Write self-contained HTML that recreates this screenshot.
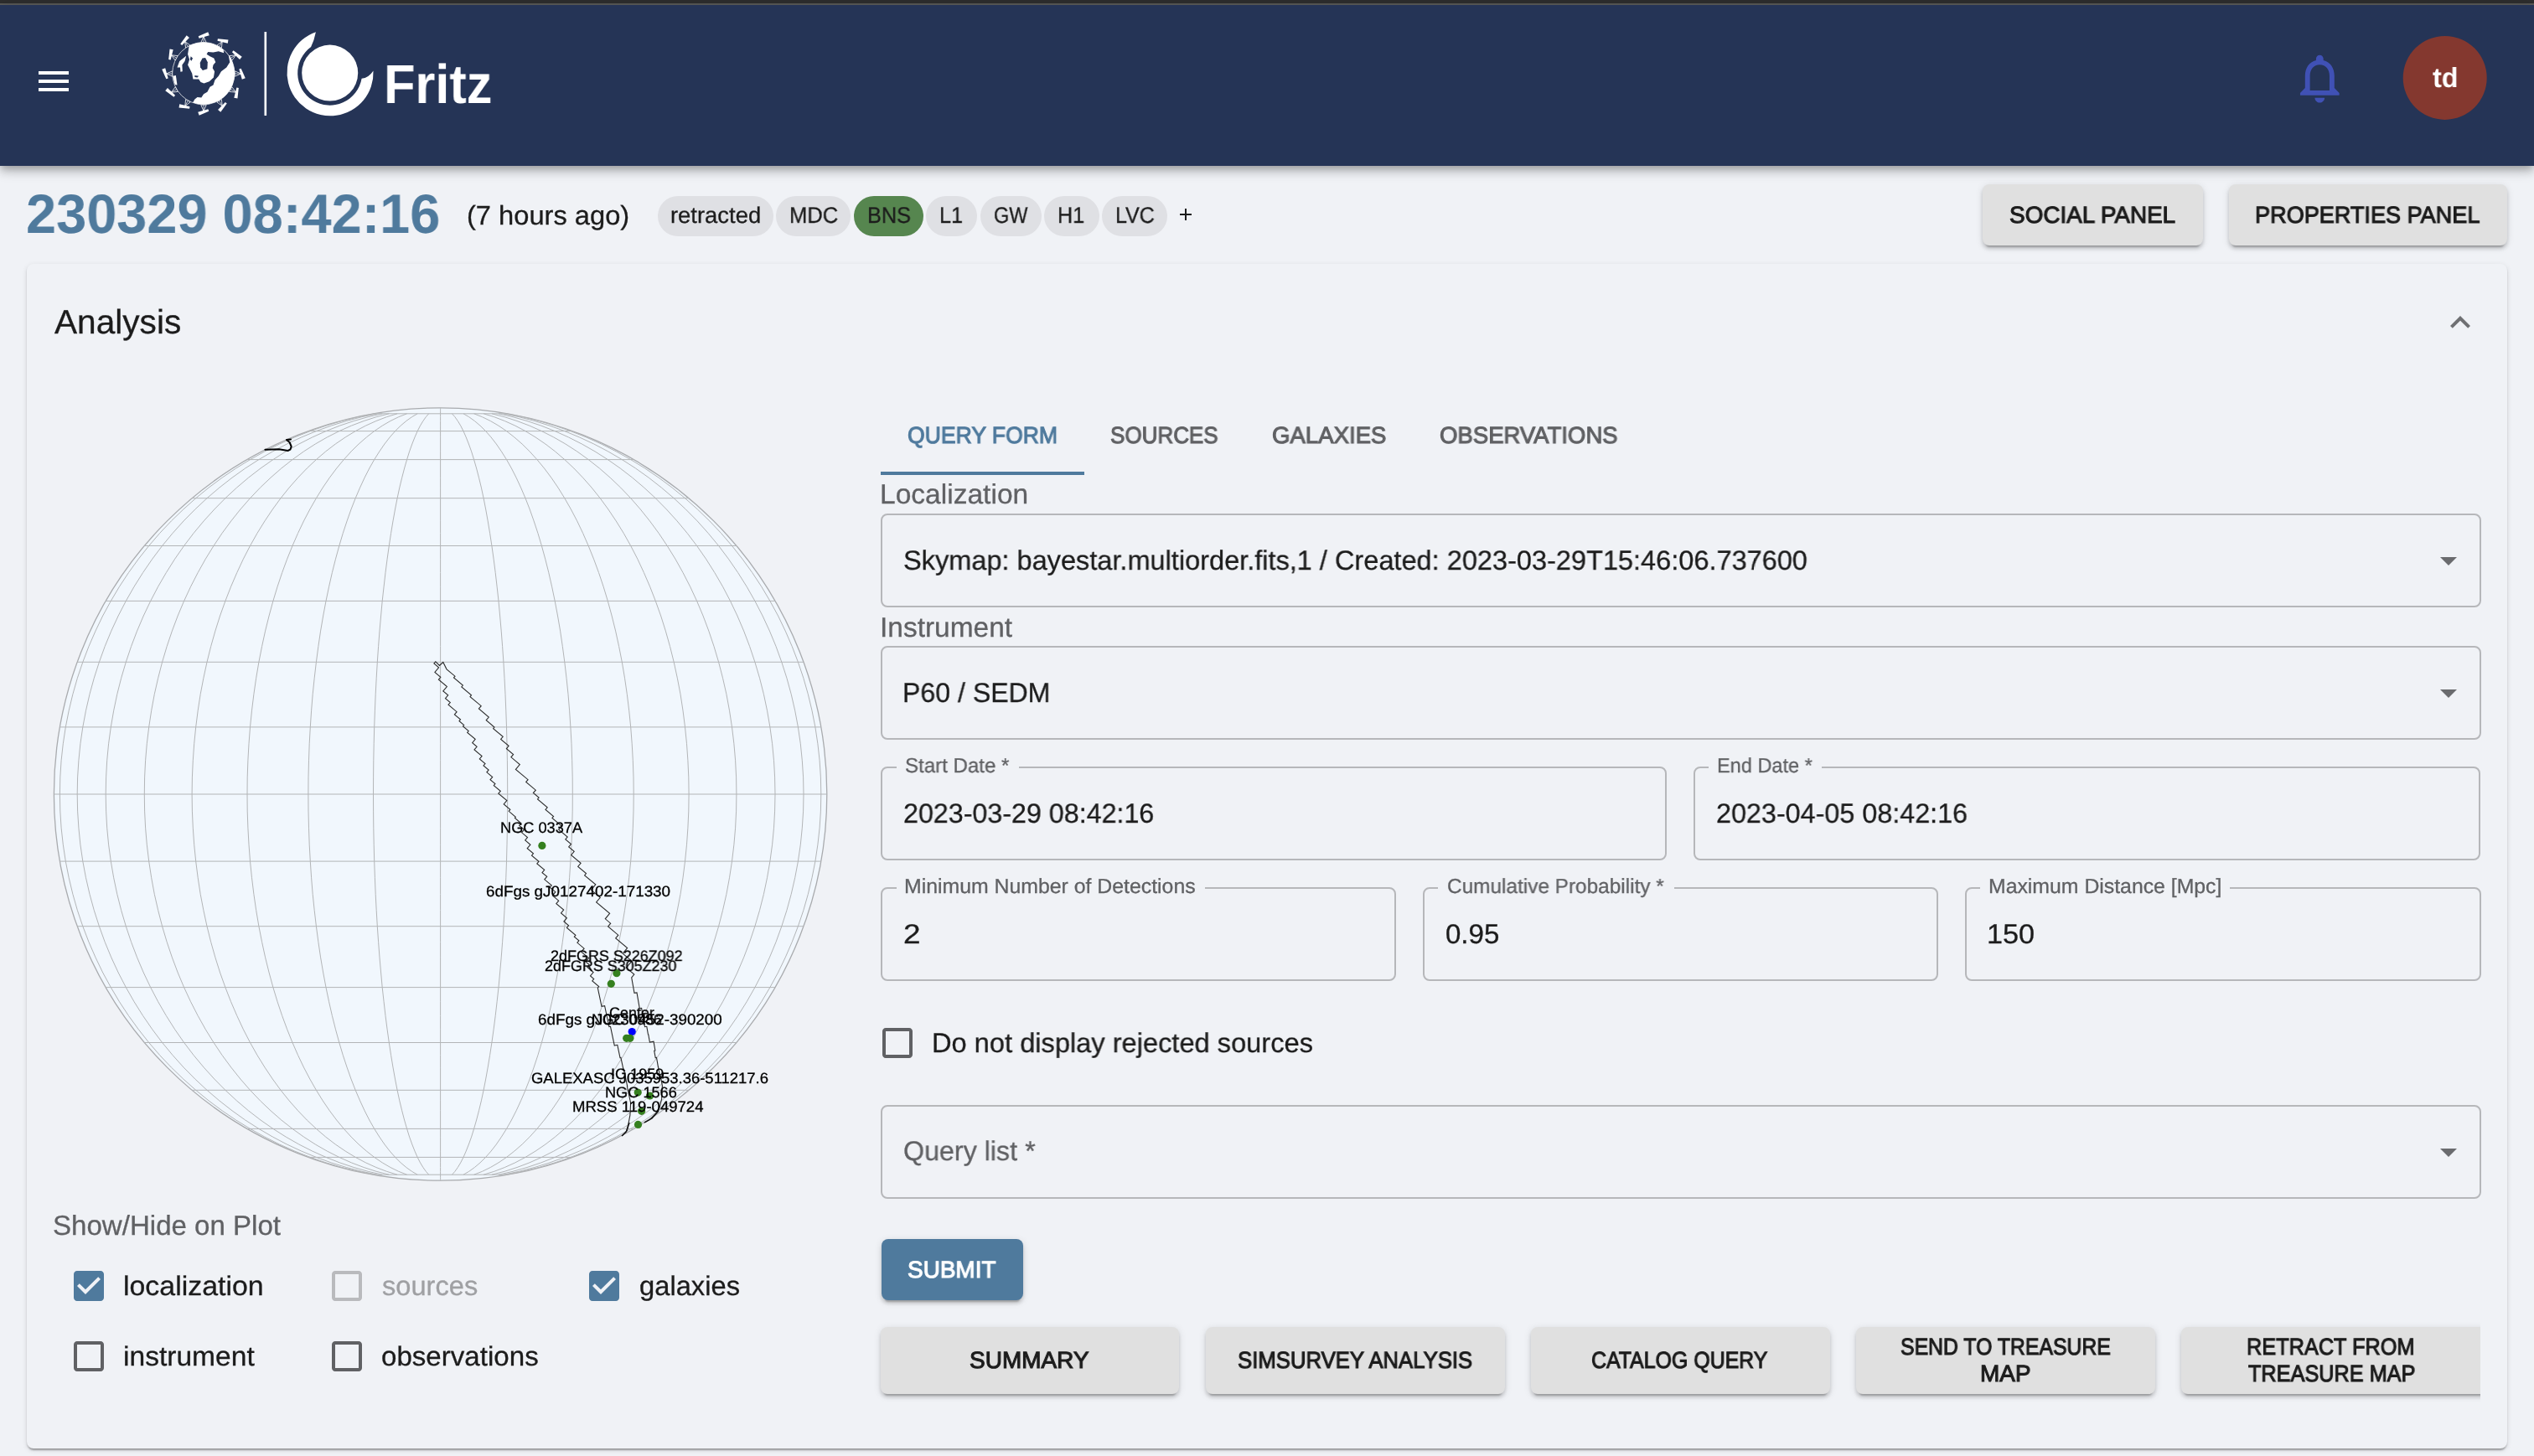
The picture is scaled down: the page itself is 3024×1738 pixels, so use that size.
<!DOCTYPE html>
<html lang="en"><head><meta charset="utf-8"><title>Fritz</title><style>
html,body{margin:0;padding:0}
body{width:3024px;height:1738px;overflow:hidden;background:#f0f2f6;font-family:"Liberation Sans",sans-serif;position:relative}
.t{position:absolute;will-change:transform;text-rendering:geometricPrecision;white-space:nowrap;line-height:1;transform-origin:0 0;margin:0;padding:0}
.b{position:absolute;box-sizing:border-box}
svg{position:absolute;overflow:visible}
</style></head>
<body>
<div class="b" style="left:0.00px;top:0.00px;width:3024.00px;height:5.00px;background:#2d2d2d"></div>
<div class="b" style="left:0.00px;top:4.00px;width:3024.00px;height:2.00px;background:#5a5a58"></div>
<div class="b" style="left:0.00px;top:6.00px;width:3024.00px;height:191.50px;background:#253456;box-shadow:0 4px 8px -2px rgba(0,0,0,.2),0 8px 10px 0 rgba(0,0,0,.14),0 2px 20px 0 rgba(0,0,0,.12)"></div>
<div class="b" style="left:46.00px;top:85.00px;width:36.00px;height:4.00px;background:#fff"></div>
<div class="b" style="left:46.00px;top:95.00px;width:36.00px;height:4.00px;background:#fff"></div>
<div class="b" style="left:46.00px;top:105.00px;width:36.00px;height:4.00px;background:#fff"></div>
<svg style="left:0;top:0" width="3024" height="200" viewBox="0 0 3024 200"><line x1="239.8" y1="50.8" x2="243.0" y2="43.5" stroke="#fff" stroke-width="0.8"/><line x1="246.2" y1="50.8" x2="243.0" y2="43.5" stroke="#fff" stroke-width="0.8"/><line x1="246.2" y1="50.8" x2="239.8" y2="50.8" stroke="#fff" stroke-width="0.7"/><line x1="243.0" y1="50.8" x2="243.0" y2="43.5" stroke="#fff" stroke-width="0.7"/><polygon points="-6.2,-1.25 6.4,-2.1 6.4,2.1 -6.2,1.25" fill="#fff" transform="translate(243.0,42.4) rotate(-20.0)"/><line x1="258.8" y1="54.2" x2="265.2" y2="49.5" stroke="#fff" stroke-width="0.8"/><line x1="264.4" y1="57.4" x2="265.2" y2="49.5" stroke="#fff" stroke-width="0.8"/><line x1="264.4" y1="57.4" x2="258.8" y2="54.2" stroke="#fff" stroke-width="0.7"/><line x1="261.6" y1="55.8" x2="265.2" y2="49.5" stroke="#fff" stroke-width="0.7"/><polygon points="-6.2,-1.25 6.4,-2.1 6.4,2.1 -6.2,1.25" fill="#fff" transform="translate(265.8,48.5) rotate(10.0)"/><line x1="273.6" y1="66.6" x2="281.5" y2="65.8" stroke="#fff" stroke-width="0.8"/><line x1="276.8" y1="72.2" x2="281.5" y2="65.8" stroke="#fff" stroke-width="0.8"/><line x1="276.8" y1="72.2" x2="273.6" y2="66.6" stroke="#fff" stroke-width="0.7"/><line x1="275.2" y1="69.4" x2="281.5" y2="65.8" stroke="#fff" stroke-width="0.7"/><polygon points="-6.2,-1.25 6.4,-2.1 6.4,2.1 -6.2,1.25" fill="#fff" transform="translate(282.5,65.2) rotate(40.0)"/><line x1="280.2" y1="84.8" x2="287.5" y2="88.0" stroke="#fff" stroke-width="0.8"/><line x1="280.2" y1="91.2" x2="287.5" y2="88.0" stroke="#fff" stroke-width="0.8"/><line x1="280.2" y1="91.2" x2="280.2" y2="84.8" stroke="#fff" stroke-width="0.7"/><line x1="280.2" y1="88.0" x2="287.5" y2="88.0" stroke="#fff" stroke-width="0.7"/><polygon points="-6.2,-1.25 6.4,-2.1 6.4,2.1 -6.2,1.25" fill="#fff" transform="translate(288.6,88.0) rotate(70.0)"/><line x1="276.8" y1="103.8" x2="281.5" y2="110.2" stroke="#fff" stroke-width="0.8"/><line x1="273.6" y1="109.4" x2="281.5" y2="110.2" stroke="#fff" stroke-width="0.8"/><line x1="273.6" y1="109.4" x2="276.8" y2="103.8" stroke="#fff" stroke-width="0.7"/><line x1="275.2" y1="106.6" x2="281.5" y2="110.2" stroke="#fff" stroke-width="0.7"/><polygon points="-6.2,-1.25 6.4,-2.1 6.4,2.1 -6.2,1.25" fill="#fff" transform="translate(282.5,110.8) rotate(100.0)"/><line x1="264.4" y1="118.6" x2="265.2" y2="126.5" stroke="#fff" stroke-width="0.8"/><line x1="258.8" y1="121.8" x2="265.2" y2="126.5" stroke="#fff" stroke-width="0.8"/><line x1="258.8" y1="121.8" x2="264.4" y2="118.6" stroke="#fff" stroke-width="0.7"/><line x1="261.6" y1="120.2" x2="265.2" y2="126.5" stroke="#fff" stroke-width="0.7"/><polygon points="-6.2,-1.25 6.4,-2.1 6.4,2.1 -6.2,1.25" fill="#fff" transform="translate(265.8,127.5) rotate(130.0)"/><line x1="246.2" y1="125.2" x2="243.0" y2="132.5" stroke="#fff" stroke-width="0.8"/><line x1="239.8" y1="125.2" x2="243.0" y2="132.5" stroke="#fff" stroke-width="0.8"/><line x1="239.8" y1="125.2" x2="246.2" y2="125.2" stroke="#fff" stroke-width="0.7"/><line x1="243.0" y1="125.2" x2="243.0" y2="132.5" stroke="#fff" stroke-width="0.7"/><polygon points="-6.2,-1.25 6.4,-2.1 6.4,2.1 -6.2,1.25" fill="#fff" transform="translate(243.0,133.6) rotate(160.0)"/><line x1="227.2" y1="121.8" x2="220.8" y2="126.5" stroke="#fff" stroke-width="0.8"/><line x1="221.6" y1="118.6" x2="220.8" y2="126.5" stroke="#fff" stroke-width="0.8"/><line x1="221.6" y1="118.6" x2="227.2" y2="121.8" stroke="#fff" stroke-width="0.7"/><line x1="224.4" y1="120.2" x2="220.8" y2="126.5" stroke="#fff" stroke-width="0.7"/><polygon points="-6.2,-1.25 6.4,-2.1 6.4,2.1 -6.2,1.25" fill="#fff" transform="translate(220.2,127.5) rotate(190.0)"/><line x1="212.4" y1="109.4" x2="204.5" y2="110.2" stroke="#fff" stroke-width="0.8"/><line x1="209.2" y1="103.8" x2="204.5" y2="110.2" stroke="#fff" stroke-width="0.8"/><line x1="209.2" y1="103.8" x2="212.4" y2="109.4" stroke="#fff" stroke-width="0.7"/><line x1="210.8" y1="106.6" x2="204.5" y2="110.2" stroke="#fff" stroke-width="0.7"/><polygon points="-6.2,-1.25 6.4,-2.1 6.4,2.1 -6.2,1.25" fill="#fff" transform="translate(203.5,110.8) rotate(220.0)"/><line x1="205.8" y1="91.2" x2="198.5" y2="88.0" stroke="#fff" stroke-width="0.8"/><line x1="205.8" y1="84.8" x2="198.5" y2="88.0" stroke="#fff" stroke-width="0.8"/><line x1="205.8" y1="84.8" x2="205.8" y2="91.2" stroke="#fff" stroke-width="0.7"/><line x1="205.8" y1="88.0" x2="198.5" y2="88.0" stroke="#fff" stroke-width="0.7"/><polygon points="-6.2,-1.25 6.4,-2.1 6.4,2.1 -6.2,1.25" fill="#fff" transform="translate(197.4,88.0) rotate(250.0)"/><line x1="209.2" y1="72.2" x2="204.5" y2="65.8" stroke="#fff" stroke-width="0.8"/><line x1="212.4" y1="66.6" x2="204.5" y2="65.8" stroke="#fff" stroke-width="0.8"/><line x1="212.4" y1="66.6" x2="209.2" y2="72.2" stroke="#fff" stroke-width="0.7"/><line x1="210.8" y1="69.4" x2="204.5" y2="65.8" stroke="#fff" stroke-width="0.7"/><polygon points="-6.2,-1.25 6.4,-2.1 6.4,2.1 -6.2,1.25" fill="#fff" transform="translate(203.5,65.2) rotate(280.0)"/><line x1="221.6" y1="57.4" x2="220.7" y2="49.5" stroke="#fff" stroke-width="0.8"/><line x1="227.2" y1="54.2" x2="220.7" y2="49.5" stroke="#fff" stroke-width="0.8"/><line x1="227.2" y1="54.2" x2="221.6" y2="57.4" stroke="#fff" stroke-width="0.7"/><line x1="224.4" y1="55.8" x2="220.7" y2="49.5" stroke="#fff" stroke-width="0.7"/><polygon points="-6.2,-1.25 6.4,-2.1 6.4,2.1 -6.2,1.25" fill="#fff" transform="translate(220.2,48.5) rotate(310.0)"/><g transform="translate(185,30) scale(0.07899)"><circle cx="732" cy="730" r="470" fill="#253456" stroke="#fff" stroke-width="9"/><path fill="#fff" d="M1034 370 A470 470 0 0 1 571 1172 L600 1120 L640 1090 L700 1095 L735 1040 L790 1010 L830 935 L880 905 L905 830 L960 770 L1000 700 L1080 640 L1130 560 L1110 450 Z"/><path fill="#fff" d="M515 310 A470 470 0 0 1 1034 370 L1040 420 L960 395 L880 410 L800 405 L780 440 L830 470 L890 500 L915 560 L880 600 L870 650 L900 700 L885 790 L820 850 L740 880 L690 860 L660 815 L575 815 L560 730 L520 650 L495 600 L520 520 L495 440 Z"/><path fill="#253456" d="M715 500 L760 495 L795 560 L790 660 L720 685 L685 640 L680 570 Z"/><path fill="#253456" d="M540 470 L570 500 L550 540 L530 520 Z M600 760 L660 770 L640 790 L600 785 Z"/><path fill="#fff" d="M335 640 L370 545 L470 465 L450 545 L410 600 L415 700 L385 705 L380 640 Z"/><path fill="#fff" d="M268 770 L315 760 L335 905 L300 900 Z"/></g><rect x="315.5" y="38" width="2.6" height="100" fill="#fff"/><path fill="#fff" d="M376.9 38.2 A51.5 51.5 0 1 0 445.5 84.5 Q440.0 93.0 431.6 93.8 A38.5 38.5 0 1 1 371.1 56.0 Q375.0 48.0 376.9 38.2 Z"/><circle cx="393.7" cy="87.1" r="33.5" fill="#fff"/><g transform="translate(2733.3,58.4) scale(2.9167)"><path fill="#4051b5" d="M12 22c1.1 0 2-.9 2-2h-4c0 1.1.9 2 2 2zm6-6v-5c0-3.07-1.63-5.64-4.5-6.32V4c0-.83-.67-1.5-1.5-1.5s-1.5.67-1.5 1.5v.68C7.64 5.36 6 7.92 6 11v5l-2 2v1h16v-1l-2-2zm-2 1H8v-6c0-2.48 1.51-4.5 4-4.5s4 2.02 4 4.5v6z"/></g><circle cx="2917.7" cy="92.9" r="50" fill="#84382f"/></svg>
<div class="t" style="left:457.82px;top:68.00px;font-size:65.50px;font-weight:700;color:#fff;transform:scaleX(0.9358);">Fritz</div>
<div class="t" style="left:2903.20px;top:76.00px;font-size:33.00px;font-weight:700;color:#fff;transform:scaleX(0.9774);">td</div>
<div class="t" style="left:31.33px;top:222.00px;font-size:66.00px;font-weight:700;color:#4f7a9d;transform:scaleX(0.9833);">230329 08:42:16</div>
<div class="t" style="left:556.79px;top:241.00px;font-size:32.00px;color:#1c1c1c;-webkit-text-stroke:0.30px #1c1c1c;transform:scaleX(1.0205);">(7 hours ago)</div>
<div class="b" style="left:784.90px;top:234.00px;width:138.10px;height:48.00px;border-radius:24px;background:#dfe0e4"></div>
<div class="t" style="left:799.57px;top:244.00px;font-size:27.00px;color:#1c1c1c;-webkit-text-stroke:0.30px #1c1c1c;transform:scaleX(1.0148);">retracted</div>
<div class="b" style="left:925.70px;top:234.00px;width:89.80px;height:48.00px;border-radius:24px;background:#dfe0e4"></div>
<div class="t" style="left:941.81px;top:244.00px;font-size:27.00px;color:#1c1c1c;-webkit-text-stroke:0.30px #1c1c1c;transform:scaleX(0.9465);">MDC</div>
<div class="b" style="left:1018.80px;top:234.00px;width:83.20px;height:48.00px;border-radius:24px;background:#56864f"></div>
<div class="t" style="left:1034.63px;top:244.00px;font-size:27.00px;color:#1c1c1c;-webkit-text-stroke:0.30px #1c1c1c;transform:scaleX(0.9353);">BNS</div>
<div class="b" style="left:1104.80px;top:234.00px;width:61.20px;height:48.00px;border-radius:24px;background:#dfe0e4"></div>
<div class="t" style="left:1120.83px;top:244.00px;font-size:27.00px;color:#1c1c1c;-webkit-text-stroke:0.30px #1c1c1c;transform:scaleX(0.9349);">L1</div>
<div class="b" style="left:1169.70px;top:234.00px;width:73.20px;height:48.00px;border-radius:24px;background:#dfe0e4"></div>
<div class="t" style="left:1185.97px;top:244.00px;font-size:27.00px;color:#1c1c1c;-webkit-text-stroke:0.30px #1c1c1c;transform:scaleX(0.8707);">GW</div>
<div class="b" style="left:1246.20px;top:234.00px;width:65.70px;height:48.00px;border-radius:24px;background:#dfe0e4"></div>
<div class="t" style="left:1261.74px;top:244.00px;font-size:27.00px;color:#1c1c1c;-webkit-text-stroke:0.30px #1c1c1c;transform:scaleX(0.9308);">H1</div>
<div class="b" style="left:1315.20px;top:234.00px;width:77.90px;height:48.00px;border-radius:24px;background:#dfe0e4"></div>
<div class="t" style="left:1330.75px;top:244.00px;font-size:27.00px;color:#1c1c1c;-webkit-text-stroke:0.30px #1c1c1c;transform:scaleX(0.9265);">LVC</div>
<div class="b" style="left:1408.00px;top:254.80px;width:14.00px;height:2.00px;background:#1c1c1c"></div>
<div class="b" style="left:1414.00px;top:248.80px;width:2.00px;height:14.00px;background:#1c1c1c"></div>
<div class="b" style="left:2366.00px;top:220.00px;width:262.50px;height:73.00px;border-radius:8px;background:#e0e0e0;box-shadow:0 6px 2px -4px rgba(0,0,0,.2),0 4px 4px 0 rgba(0,0,0,.14),0 2px 10px 0 rgba(0,0,0,.12)"></div>
<div class="b" style="left:2659.50px;top:220.00px;width:332.50px;height:73.00px;border-radius:8px;background:#e0e0e0;box-shadow:0 6px 2px -4px rgba(0,0,0,.2),0 4px 4px 0 rgba(0,0,0,.14),0 2px 10px 0 rgba(0,0,0,.12)"></div>
<div class="t" style="left:2397.90px;top:243.00px;font-size:28.00px;color:#1c1c1c;-webkit-text-stroke:1.10px #1c1c1c;transform:scaleX(0.9947);">SOCIAL PANEL</div>
<div class="t" style="left:2691.28px;top:243.00px;font-size:28.00px;color:#1c1c1c;-webkit-text-stroke:1.10px #1c1c1c;transform:scaleX(0.9672);">PROPERTIES PANEL</div>
<div class="b" style="left:32.00px;top:314.50px;width:2960.00px;height:1414.00px;border-radius:8px;background:#f0f2f6;box-shadow:0 4px 2px -2px rgba(0,0,0,.2),0 2px 2px 0 rgba(0,0,0,.14),0 2px 6px 0 rgba(0,0,0,.12)"></div>
<div class="t" style="left:64.55px;top:364.00px;font-size:40.50px;color:#1c1c1c;-webkit-text-stroke:0.30px #1c1c1c;transform:scaleX(1.0031);">Analysis</div>
<svg style="left:2912px;top:361px" width="48" height="48" viewBox="0 0 24 24"><path fill="#6f7073" d="m12 8-6 6 1.41 1.41L12 10.83l4.59 4.58L18 14z"/></svg>
<svg style="left:0;top:0" width="1040" height="1738" viewBox="0 0 1040 1738"><circle cx="525.6" cy="948.0" r="461.2" fill="#f1f7fd" stroke="#a9abae" stroke-width="1.3"/><path d="M446.7 1402.2 L427.3 1398.3 L408.0 1393.5 L389.0 1387.9 L370.3 1381.4 L351.8 1374.1 L333.6 1366.0 L315.9 1357.1 L298.5 1347.4 L281.6 1337.0 L265.1 1325.8 L249.1 1313.9 L233.7 1301.3 L218.8 1288.0 L204.4 1274.1 L190.7 1259.6 L177.7 1244.5 L165.3 1228.8 L153.5 1212.5 L142.5 1195.8 L132.3 1178.6 L122.7 1161.0 L114.0 1142.9 L106.0 1124.5 L98.8 1105.7 L92.4 1086.7 L86.9 1067.4 L82.2 1047.8 L78.3 1028.1 L75.3 1008.2 L73.1 988.2 L71.8 968.1 L71.4 948.0 L71.8 927.9 L73.1 907.8 L75.3 887.8 L78.3 867.9 L82.2 848.2 L86.9 828.6 L92.4 809.3 L98.8 790.3 L106.0 771.5 L114.0 753.1 L122.7 735.0 L132.3 717.4 L142.5 700.2 L153.5 683.5 L165.3 667.2 L177.7 651.5 L190.7 636.4 L204.4 621.9 L218.8 608.0 L233.7 594.7 L249.1 582.1 L265.1 570.2 L281.6 559.0 L298.5 548.6 L315.9 538.9 L333.6 530.0 L351.8 521.9 L370.3 514.6 L389.0 508.1 L408.0 502.5 L427.3 497.7 L446.7 493.8 M450.3 1402.2 L431.8 1398.3 L413.4 1393.5 L395.3 1387.9 L377.4 1381.4 L359.8 1374.1 L342.4 1366.0 L325.5 1357.1 L308.9 1347.4 L292.7 1337.0 L277.0 1325.8 L261.8 1313.9 L247.0 1301.3 L232.8 1288.0 L219.1 1274.1 L206.1 1259.6 L193.6 1244.5 L181.8 1228.8 L170.6 1212.5 L160.1 1195.8 L150.3 1178.6 L141.2 1161.0 L132.8 1142.9 L125.2 1124.5 L118.4 1105.7 L112.3 1086.7 L107.0 1067.4 L102.5 1047.8 L98.8 1028.1 L95.9 1008.2 L93.9 988.2 L92.6 968.1 L92.2 948.0 L92.6 927.9 L93.9 907.8 L95.9 887.8 L98.8 867.9 L102.5 848.2 L107.0 828.6 L112.3 809.3 L118.4 790.3 L125.2 771.5 L132.8 753.1 L141.2 735.0 L150.3 717.4 L160.1 700.2 L170.6 683.5 L181.8 667.2 L193.6 651.5 L206.1 636.4 L219.1 621.9 L232.8 608.0 L247.0 594.7 L261.8 582.1 L277.0 570.2 L292.7 559.0 L308.9 548.6 L325.5 538.9 L342.4 530.0 L359.8 521.9 L377.4 514.6 L395.3 508.1 L413.4 502.5 L431.8 497.7 L450.3 493.8 M456.2 1402.2 L439.2 1398.3 L422.2 1393.5 L405.5 1387.9 L389.0 1381.4 L372.8 1374.1 L356.8 1366.0 L341.2 1357.1 L325.9 1347.4 L311.0 1337.0 L296.5 1325.8 L282.5 1313.9 L268.9 1301.3 L255.8 1288.0 L243.2 1274.1 L231.1 1259.6 L219.6 1244.5 L208.7 1228.8 L198.4 1212.5 L188.7 1195.8 L179.7 1178.6 L171.3 1161.0 L163.6 1142.9 L156.6 1124.5 L150.3 1105.7 L144.7 1086.7 L139.8 1067.4 L135.7 1047.8 L132.3 1028.1 L129.6 1008.2 L127.7 988.2 L126.6 968.1 L126.2 948.0 L126.6 927.9 L127.7 907.8 L129.6 887.8 L132.3 867.9 L135.7 848.2 L139.8 828.6 L144.7 809.3 L150.3 790.3 L156.6 771.5 L163.6 753.1 L171.3 735.0 L179.7 717.4 L188.7 700.2 L198.4 683.5 L208.7 667.2 L219.6 651.5 L231.1 636.4 L243.2 621.9 L255.8 608.0 L268.9 594.7 L282.5 582.1 L296.5 570.2 L311.0 559.0 L325.9 548.6 L341.2 538.9 L356.8 530.0 L372.8 521.9 L389.0 514.6 L405.5 508.1 L422.2 502.5 L439.2 497.7 L456.2 493.8 M464.3 1402.2 L449.1 1398.3 L434.2 1393.5 L419.4 1387.9 L404.8 1381.4 L390.4 1374.1 L376.3 1366.0 L362.5 1357.1 L349.0 1347.4 L335.8 1337.0 L323.0 1325.8 L310.5 1313.9 L298.5 1301.3 L286.9 1288.0 L275.8 1274.1 L265.1 1259.6 L255.0 1244.5 L245.3 1228.8 L236.2 1212.5 L227.6 1195.8 L219.6 1178.6 L212.2 1161.0 L205.4 1142.9 L199.2 1124.5 L193.6 1105.7 L188.7 1086.7 L184.3 1067.4 L180.7 1047.8 L177.7 1028.1 L175.3 1008.2 L173.6 988.2 L172.6 968.1 L172.3 948.0 L172.6 927.9 L173.6 907.8 L175.3 887.8 L177.7 867.9 L180.7 848.2 L184.3 828.6 L188.7 809.3 L193.6 790.3 L199.2 771.5 L205.4 753.1 L212.2 735.0 L219.6 717.4 L227.6 700.2 L236.2 683.5 L245.3 667.2 L255.0 651.5 L265.1 636.4 L275.8 621.9 L286.9 608.0 L298.5 594.7 L310.5 582.1 L323.0 570.2 L335.8 559.0 L349.0 548.6 L362.5 538.9 L376.3 530.0 L390.4 521.9 L404.8 514.6 L419.4 508.1 L434.2 502.5 L449.1 497.7 L464.3 493.8 M474.1 1402.2 L461.4 1398.3 L448.9 1393.5 L436.5 1387.9 L424.2 1381.4 L412.2 1374.1 L400.3 1366.0 L388.7 1357.1 L377.4 1347.4 L366.3 1337.0 L355.6 1325.8 L345.1 1313.9 L335.0 1301.3 L325.3 1288.0 L316.0 1274.1 L307.0 1259.6 L298.5 1244.5 L290.4 1228.8 L282.8 1212.5 L275.6 1195.8 L268.9 1178.6 L262.6 1161.0 L256.9 1142.9 L251.7 1124.5 L247.0 1105.7 L242.9 1086.7 L239.2 1067.4 L236.2 1047.8 L233.7 1028.1 L231.7 1008.2 L230.3 988.2 L229.4 968.1 L229.1 948.0 L229.4 927.9 L230.3 907.8 L231.7 887.8 L233.7 867.9 L236.2 848.2 L239.2 828.6 L242.9 809.3 L247.0 790.3 L251.7 771.5 L256.9 753.1 L262.6 735.0 L268.9 717.4 L275.6 700.2 L282.8 683.5 L290.4 667.2 L298.5 651.5 L307.0 636.4 L316.0 621.9 L325.3 608.0 L335.0 594.7 L345.1 582.1 L355.6 570.2 L366.3 559.0 L377.4 548.6 L388.7 538.9 L400.3 530.0 L412.2 521.9 L424.2 514.6 L436.5 508.1 L448.9 502.5 L461.4 497.7 L474.1 493.8 M485.6 1402.2 L475.7 1398.3 L465.9 1393.5 L456.3 1387.9 L446.7 1381.4 L437.4 1374.1 L428.1 1366.0 L419.1 1357.1 L410.3 1347.4 L401.7 1337.0 L393.3 1325.8 L385.2 1313.9 L377.4 1301.3 L369.8 1288.0 L362.5 1274.1 L355.6 1259.6 L349.0 1244.5 L342.7 1228.8 L336.7 1212.5 L331.1 1195.8 L325.9 1178.6 L321.1 1161.0 L316.6 1142.9 L312.6 1124.5 L308.9 1105.7 L305.7 1086.7 L302.9 1067.4 L300.5 1047.8 L298.5 1028.1 L297.0 1008.2 L295.9 988.2 L295.2 968.1 L295.0 948.0 L295.2 927.9 L295.9 907.8 L297.0 887.8 L298.5 867.9 L300.5 848.2 L302.9 828.6 L305.7 809.3 L308.9 790.3 L312.6 771.5 L316.6 753.1 L321.1 735.0 L325.9 717.4 L331.1 700.2 L336.7 683.5 L342.7 667.2 L349.0 651.5 L355.6 636.4 L362.5 621.9 L369.8 608.0 L377.4 594.7 L385.2 582.1 L393.3 570.2 L401.7 559.0 L410.3 548.6 L419.1 538.9 L428.1 530.0 L437.4 521.9 L446.7 514.6 L456.3 508.1 L465.9 502.5 L475.7 497.7 L485.6 493.8 M498.2 1402.2 L491.5 1398.3 L484.8 1393.5 L478.2 1387.9 L471.6 1381.4 L465.2 1374.1 L458.9 1366.0 L452.8 1357.1 L446.7 1347.4 L440.8 1337.0 L435.1 1325.8 L429.6 1313.9 L424.2 1301.3 L419.0 1288.0 L414.1 1274.1 L409.3 1259.6 L404.8 1244.5 L400.5 1228.8 L396.4 1212.5 L392.6 1195.8 L389.0 1178.6 L385.7 1161.0 L382.6 1142.9 L379.9 1124.5 L377.4 1105.7 L375.2 1086.7 L373.2 1067.4 L371.6 1047.8 L370.3 1028.1 L369.2 1008.2 L368.5 988.2 L368.0 968.1 L367.9 948.0 L368.0 927.9 L368.5 907.8 L369.2 887.8 L370.3 867.9 L371.6 848.2 L373.2 828.6 L375.2 809.3 L377.4 790.3 L379.9 771.5 L382.6 753.1 L385.7 735.0 L389.0 717.4 L392.6 700.2 L396.4 683.5 L400.5 667.2 L404.8 651.5 L409.3 636.4 L414.1 621.9 L419.0 608.0 L424.2 594.7 L429.6 582.1 L435.1 570.2 L440.8 559.0 L446.7 548.6 L452.8 538.9 L458.9 530.0 L465.2 521.9 L471.6 514.6 L478.2 508.1 L484.8 502.5 L491.5 497.7 L498.2 493.8 M511.7 1402.2 L508.3 1398.3 L504.9 1393.5 L501.5 1387.9 L498.2 1381.4 L495.0 1374.1 L491.8 1366.0 L488.6 1357.1 L485.6 1347.4 L482.6 1337.0 L479.7 1325.8 L476.8 1313.9 L474.1 1301.3 L471.5 1288.0 L469.0 1274.1 L466.6 1259.6 L464.3 1244.5 L462.1 1228.8 L460.0 1212.5 L458.1 1195.8 L456.2 1178.6 L454.6 1161.0 L453.0 1142.9 L451.6 1124.5 L450.3 1105.7 L449.2 1086.7 L448.2 1067.4 L447.4 1047.8 L446.7 1028.1 L446.2 1008.2 L445.8 988.2 L445.6 968.1 L445.5 948.0 L445.6 927.9 L445.8 907.8 L446.2 887.8 L446.7 867.9 L447.4 848.2 L448.2 828.6 L449.2 809.3 L450.3 790.3 L451.6 771.5 L453.0 753.1 L454.6 735.0 L456.2 717.4 L458.1 700.2 L460.0 683.5 L462.1 667.2 L464.3 651.5 L466.6 636.4 L469.0 621.9 L471.5 608.0 L474.1 594.7 L476.8 582.1 L479.7 570.2 L482.6 559.0 L485.6 548.6 L488.6 538.9 L491.8 530.0 L495.0 521.9 L498.2 514.6 L501.5 508.1 L504.9 502.5 L508.3 497.7 L511.7 493.8 M525.6 1409.2 L525.6 1408.8 L525.6 1407.4 L525.6 1405.3 L525.6 1402.2 L525.6 1398.3 L525.6 1393.5 L525.6 1387.9 L525.6 1381.4 L525.6 1374.1 L525.6 1366.0 L525.6 1357.1 L525.6 1347.4 L525.6 1337.0 L525.6 1325.8 L525.6 1313.9 L525.6 1301.3 L525.6 1288.0 L525.6 1274.1 L525.6 1259.6 L525.6 1244.5 L525.6 1228.8 L525.6 1212.5 L525.6 1195.8 L525.6 1178.6 L525.6 1161.0 L525.6 1142.9 L525.6 1124.5 L525.6 1105.7 L525.6 1086.7 L525.6 1067.4 L525.6 1047.8 L525.6 1028.1 L525.6 1008.2 L525.6 988.2 L525.6 968.1 L525.6 948.0 L525.6 927.9 L525.6 907.8 L525.6 887.8 L525.6 867.9 L525.6 848.2 L525.6 828.6 L525.6 809.3 L525.6 790.3 L525.6 771.5 L525.6 753.1 L525.6 735.0 L525.6 717.4 L525.6 700.2 L525.6 683.5 L525.6 667.2 L525.6 651.5 L525.6 636.4 L525.6 621.9 L525.6 608.0 L525.6 594.7 L525.6 582.1 L525.6 570.2 L525.6 559.0 L525.6 548.6 L525.6 538.9 L525.6 530.0 L525.6 521.9 L525.6 514.6 L525.6 508.1 L525.6 502.5 L525.6 497.7 L525.6 493.8 L525.6 490.7 L525.6 488.6 L525.6 487.2 L525.6 486.8 M539.5 1402.2 L542.9 1398.3 L546.3 1393.5 L549.7 1387.9 L553.0 1381.4 L556.2 1374.1 L559.4 1366.0 L562.6 1357.1 L565.6 1347.4 L568.6 1337.0 L571.5 1325.8 L574.4 1313.9 L577.1 1301.3 L579.7 1288.0 L582.2 1274.1 L584.6 1259.6 L586.9 1244.5 L589.1 1228.8 L591.2 1212.5 L593.1 1195.8 L595.0 1178.6 L596.6 1161.0 L598.2 1142.9 L599.6 1124.5 L600.9 1105.7 L602.0 1086.7 L603.0 1067.4 L603.8 1047.8 L604.5 1028.1 L605.0 1008.2 L605.4 988.2 L605.6 968.1 L605.7 948.0 L605.6 927.9 L605.4 907.8 L605.0 887.8 L604.5 867.9 L603.8 848.2 L603.0 828.6 L602.0 809.3 L600.9 790.3 L599.6 771.5 L598.2 753.1 L596.6 735.0 L595.0 717.4 L593.1 700.2 L591.2 683.5 L589.1 667.2 L586.9 651.5 L584.6 636.4 L582.2 621.9 L579.7 608.0 L577.1 594.7 L574.4 582.1 L571.5 570.2 L568.6 559.0 L565.6 548.6 L562.6 538.9 L559.4 530.0 L556.2 521.9 L553.0 514.6 L549.7 508.1 L546.3 502.5 L542.9 497.7 L539.5 493.8 M553.0 1402.2 L559.7 1398.3 L566.4 1393.5 L573.0 1387.9 L579.6 1381.4 L586.0 1374.1 L592.3 1366.0 L598.4 1357.1 L604.5 1347.4 L610.4 1337.0 L616.1 1325.8 L621.6 1313.9 L627.0 1301.3 L632.2 1288.0 L637.1 1274.1 L641.9 1259.6 L646.4 1244.5 L650.7 1228.8 L654.8 1212.5 L658.6 1195.8 L662.2 1178.6 L665.5 1161.0 L668.6 1142.9 L671.3 1124.5 L673.8 1105.7 L676.0 1086.7 L678.0 1067.4 L679.6 1047.8 L680.9 1028.1 L682.0 1008.2 L682.7 988.2 L683.2 968.1 L683.3 948.0 L683.2 927.9 L682.7 907.8 L682.0 887.8 L680.9 867.9 L679.6 848.2 L678.0 828.6 L676.0 809.3 L673.8 790.3 L671.3 771.5 L668.6 753.1 L665.5 735.0 L662.2 717.4 L658.6 700.2 L654.8 683.5 L650.7 667.2 L646.4 651.5 L641.9 636.4 L637.1 621.9 L632.2 608.0 L627.0 594.7 L621.6 582.1 L616.1 570.2 L610.4 559.0 L604.5 548.6 L598.4 538.9 L592.3 530.0 L586.0 521.9 L579.6 514.6 L573.0 508.1 L566.4 502.5 L559.7 497.7 L553.0 493.8 M565.6 1402.2 L575.5 1398.3 L585.3 1393.5 L594.9 1387.9 L604.5 1381.4 L613.8 1374.1 L623.1 1366.0 L632.1 1357.1 L640.9 1347.4 L649.5 1337.0 L657.9 1325.8 L666.0 1313.9 L673.8 1301.3 L681.4 1288.0 L688.7 1274.1 L695.6 1259.6 L702.2 1244.5 L708.5 1228.8 L714.5 1212.5 L720.1 1195.8 L725.3 1178.6 L730.1 1161.0 L734.6 1142.9 L738.6 1124.5 L742.3 1105.7 L745.5 1086.7 L748.3 1067.4 L750.7 1047.8 L752.7 1028.1 L754.2 1008.2 L755.3 988.2 L756.0 968.1 L756.2 948.0 L756.0 927.9 L755.3 907.8 L754.2 887.8 L752.7 867.9 L750.7 848.2 L748.3 828.6 L745.5 809.3 L742.3 790.3 L738.6 771.5 L734.6 753.1 L730.1 735.0 L725.3 717.4 L720.1 700.2 L714.5 683.5 L708.5 667.2 L702.2 651.5 L695.6 636.4 L688.7 621.9 L681.4 608.0 L673.8 594.7 L666.0 582.1 L657.9 570.2 L649.5 559.0 L640.9 548.6 L632.1 538.9 L623.1 530.0 L613.8 521.9 L604.5 514.6 L594.9 508.1 L585.3 502.5 L575.5 497.7 L565.6 493.8 M577.1 1402.2 L589.8 1398.3 L602.3 1393.5 L614.7 1387.9 L627.0 1381.4 L639.0 1374.1 L650.9 1366.0 L662.5 1357.1 L673.8 1347.4 L684.9 1337.0 L695.6 1325.8 L706.1 1313.9 L716.2 1301.3 L725.9 1288.0 L735.2 1274.1 L744.2 1259.6 L752.7 1244.5 L760.8 1228.8 L768.4 1212.5 L775.6 1195.8 L782.3 1178.6 L788.6 1161.0 L794.3 1142.9 L799.5 1124.5 L804.2 1105.7 L808.3 1086.7 L812.0 1067.4 L815.0 1047.8 L817.5 1028.1 L819.5 1008.2 L820.9 988.2 L821.8 968.1 L822.1 948.0 L821.8 927.9 L820.9 907.8 L819.5 887.8 L817.5 867.9 L815.0 848.2 L812.0 828.6 L808.3 809.3 L804.2 790.3 L799.5 771.5 L794.3 753.1 L788.6 735.0 L782.3 717.4 L775.6 700.2 L768.4 683.5 L760.8 667.2 L752.7 651.5 L744.2 636.4 L735.2 621.9 L725.9 608.0 L716.2 594.7 L706.1 582.1 L695.6 570.2 L684.9 559.0 L673.8 548.6 L662.5 538.9 L650.9 530.0 L639.0 521.9 L627.0 514.6 L614.7 508.1 L602.3 502.5 L589.8 497.7 L577.1 493.8 M586.9 1402.2 L602.1 1398.3 L617.0 1393.5 L631.8 1387.9 L646.4 1381.4 L660.8 1374.1 L674.9 1366.0 L688.7 1357.1 L702.2 1347.4 L715.4 1337.0 L728.2 1325.8 L740.7 1313.9 L752.7 1301.3 L764.3 1288.0 L775.4 1274.1 L786.1 1259.6 L796.2 1244.5 L805.9 1228.8 L815.0 1212.5 L823.6 1195.8 L831.6 1178.6 L839.0 1161.0 L845.8 1142.9 L852.0 1124.5 L857.6 1105.7 L862.5 1086.7 L866.9 1067.4 L870.5 1047.8 L873.5 1028.1 L875.9 1008.2 L877.6 988.2 L878.6 968.1 L878.9 948.0 L878.6 927.9 L877.6 907.8 L875.9 887.8 L873.5 867.9 L870.5 848.2 L866.9 828.6 L862.5 809.3 L857.6 790.3 L852.0 771.5 L845.8 753.1 L839.0 735.0 L831.6 717.4 L823.6 700.2 L815.0 683.5 L805.9 667.2 L796.2 651.5 L786.1 636.4 L775.4 621.9 L764.3 608.0 L752.7 594.7 L740.7 582.1 L728.2 570.2 L715.4 559.0 L702.2 548.6 L688.7 538.9 L674.9 530.0 L660.8 521.9 L646.4 514.6 L631.8 508.1 L617.0 502.5 L602.1 497.7 L586.9 493.8 M595.0 1402.2 L612.0 1398.3 L629.0 1393.5 L645.7 1387.9 L662.2 1381.4 L678.4 1374.1 L694.4 1366.0 L710.0 1357.1 L725.3 1347.4 L740.2 1337.0 L754.7 1325.8 L768.7 1313.9 L782.3 1301.3 L795.4 1288.0 L808.0 1274.1 L820.1 1259.6 L831.6 1244.5 L842.5 1228.8 L852.8 1212.5 L862.5 1195.8 L871.5 1178.6 L879.9 1161.0 L887.6 1142.9 L894.6 1124.5 L900.9 1105.7 L906.5 1086.7 L911.4 1067.4 L915.5 1047.8 L918.9 1028.1 L921.6 1008.2 L923.5 988.2 L924.6 968.1 L925.0 948.0 L924.6 927.9 L923.5 907.8 L921.6 887.8 L918.9 867.9 L915.5 848.2 L911.4 828.6 L906.5 809.3 L900.9 790.3 L894.6 771.5 L887.6 753.1 L879.9 735.0 L871.5 717.4 L862.5 700.2 L852.8 683.5 L842.5 667.2 L831.6 651.5 L820.1 636.4 L808.0 621.9 L795.4 608.0 L782.3 594.7 L768.7 582.1 L754.7 570.2 L740.2 559.0 L725.3 548.6 L710.0 538.9 L694.4 530.0 L678.4 521.9 L662.2 514.6 L645.7 508.1 L629.0 502.5 L612.0 497.7 L595.0 493.8 M600.9 1402.2 L619.4 1398.3 L637.8 1393.5 L655.9 1387.9 L673.8 1381.4 L691.4 1374.1 L708.8 1366.0 L725.7 1357.1 L742.3 1347.4 L758.5 1337.0 L774.2 1325.8 L789.4 1313.9 L804.2 1301.3 L818.4 1288.0 L832.1 1274.1 L845.1 1259.6 L857.6 1244.5 L869.4 1228.8 L880.6 1212.5 L891.1 1195.8 L900.9 1178.6 L910.0 1161.0 L918.4 1142.9 L926.0 1124.5 L932.8 1105.7 L938.9 1086.7 L944.2 1067.4 L948.7 1047.8 L952.4 1028.1 L955.3 1008.2 L957.3 988.2 L958.6 968.1 L959.0 948.0 L958.6 927.9 L957.3 907.8 L955.3 887.8 L952.4 867.9 L948.7 848.2 L944.2 828.6 L938.9 809.3 L932.8 790.3 L926.0 771.5 L918.4 753.1 L910.0 735.0 L900.9 717.4 L891.1 700.2 L880.6 683.5 L869.4 667.2 L857.6 651.5 L845.1 636.4 L832.1 621.9 L818.4 608.0 L804.2 594.7 L789.4 582.1 L774.2 570.2 L758.5 559.0 L742.3 548.6 L725.7 538.9 L708.8 530.0 L691.4 521.9 L673.8 514.6 L655.9 508.1 L637.8 502.5 L619.4 497.7 L600.9 493.8 M604.5 1402.2 L623.9 1398.3 L643.2 1393.5 L662.2 1387.9 L680.9 1381.4 L699.4 1374.1 L717.6 1366.0 L735.3 1357.1 L752.7 1347.4 L769.6 1337.0 L786.1 1325.8 L802.1 1313.9 L817.5 1301.3 L832.4 1288.0 L846.8 1274.1 L860.5 1259.6 L873.5 1244.5 L885.9 1228.8 L897.7 1212.5 L908.7 1195.8 L918.9 1178.6 L928.5 1161.0 L937.2 1142.9 L945.2 1124.5 L952.4 1105.7 L958.8 1086.7 L964.3 1067.4 L969.0 1047.8 L972.9 1028.1 L975.9 1008.2 L978.1 988.2 L979.4 968.1 L979.8 948.0 L979.4 927.9 L978.1 907.8 L975.9 887.8 L972.9 867.9 L969.0 848.2 L964.3 828.6 L958.8 809.3 L952.4 790.3 L945.2 771.5 L937.2 753.1 L928.5 735.0 L918.9 717.4 L908.7 700.2 L897.7 683.5 L885.9 667.2 L873.5 651.5 L860.5 636.4 L846.8 621.9 L832.4 608.0 L817.5 594.7 L802.1 582.1 L786.1 570.2 L769.6 559.0 L752.7 548.6 L735.3 538.9 L717.6 530.0 L699.4 521.9 L680.9 514.6 L662.2 508.1 L643.2 502.5 L623.9 497.7 L604.5 493.8 M445.5 1402.2 L605.7 1402.2 M367.9 1381.4 L683.3 1381.4 M295.0 1347.4 L756.2 1347.4 M229.1 1301.3 L822.1 1301.3 M172.3 1244.5 L878.9 1244.5 M126.2 1178.6 L925.0 1178.6 M92.2 1105.7 L959.0 1105.7 M71.4 1028.1 L979.8 1028.1 M64.4 948.0 L986.8 948.0 M71.4 867.9 L979.8 867.9 M92.2 790.3 L959.0 790.3 M126.2 717.4 L925.0 717.4 M172.3 651.5 L878.9 651.5 M229.1 594.7 L822.1 594.7 M295.0 548.6 L756.2 548.6 M367.9 514.6 L683.3 514.6 M445.5 493.8 L605.7 493.8" fill="none" stroke="#b3b5b7" stroke-width="1.0"/><path d="M519.9 789.9 L519.8 789.8 L517.9 792.0 L523.6 796.8 L518.9 802.5 L525.8 808.3 L523.4 811.2 L533.4 819.6 L528.8 825.0 L534.7 829.9 L531.5 833.7 L537.3 838.5 L535.0 841.2 L545.1 849.7 L542.4 852.9 L549.5 858.9 L548.0 860.7 L553.7 865.5 L552.5 867.0 L559.2 872.6 L557.7 874.4 L567.2 882.4 L563.7 886.7 L569.1 891.3 L566.0 895.0 L575.1 902.6 L572.3 906.0 L579.0 911.6 L577.0 914.0 L583.1 919.1 L580.9 921.8 L587.7 927.5 L585.0 930.7 L590.9 935.6 L589.3 937.6 L597.3 944.3 L594.8 947.2 L604.9 955.6 L601.2 960.0 L608.8 966.4 L607.2 968.3 L615.4 975.3 L614.4 976.5 L622.0 982.9 L619.7 985.5 L625.5 990.4 L622.6 993.8 L629.5 999.6 L626.7 1003.0 L632.9 1008.3 L629.2 1012.7 L636.5 1018.8 L634.5 1021.2 L643.0 1028.3 L640.8 1030.9 L649.7 1038.4 L647.0 1041.6 L652.7 1046.3 L649.8 1049.8 L658.2 1056.8 L656.2 1059.1 L662.9 1064.7 L659.3 1069.0 L666.7 1075.2 L663.8 1078.7 L672.7 1086.1 L669.5 1090.0 L676.4 1095.8 L672.9 1100.0 L678.6 1104.8 L676.4 1107.4 L686.9 1116.3 L685.3 1118.2 L690.9 1122.9 L688.9 1125.3 L697.1 1132.2 L693.7 1136.2 L702.5 1143.6 L698.9 1147.9 L703.2 1151.5 L700.7 1154.4 L708.1 1160.6 L704.5 1164.9 L708.7 1168.5 L706.8 1170.9 L714.7 1177.5 L713.3 1179.2 L718.0 1201.4 L721.6 1200.6 L726.9 1225.6 L728.5 1225.3 L733.3 1248.0 L736.8 1247.3 L740.0 1262.6 L740.9 1262.4 L743.9 1276.3 L744.3 1276.2 L748.7 1296.7 L748.4 1296.8 L752.8 1317.4 L752.6 1317.4 L751.9 1331.1 L749.8 1342.1 L747.0 1351.7 L742.3 1355.8" fill="none" stroke="#2b2b2b" stroke-width="1.1" stroke-linejoin="miter"/><path d="M519.9 789.9 L524.5 794.5 L528.8 790.5 L533.0 798.8 L543.0 807.2 L541.5 808.9 L552.4 818.1 L550.8 820.0 L562.5 829.8 L561.0 831.7 L574.2 842.7 L571.4 846.0 L583.3 856.0 L580.2 859.7 L590.0 868.0 L588.6 869.6 L600.2 879.3 L597.6 882.4 L607.1 890.4 L604.4 893.6 L612.6 900.5 L609.9 903.8 L620.3 912.5 L615.4 918.4 L630.1 930.7 L627.7 933.5 L639.3 943.2 L636.4 946.5 L643.1 952.1 L641.5 954.0 L653.2 963.8 L651.0 966.4 L660.6 974.5 L658.9 976.5 L670.2 986.0 L666.7 990.1 L677.2 999.0 L674.8 1002.0 L681.5 1007.6 L678.7 1011.0 L685.2 1016.4 L681.6 1020.7 L693.1 1030.3 L689.7 1034.4 L699.5 1042.6 L697.6 1044.9 L710.8 1055.9 L705.4 1062.3 L716.3 1071.4 L711.6 1077.0 L727.6 1090.4 L722.3 1096.8 L728.7 1102.2 L725.6 1106.0 L737.8 1116.2 L734.7 1119.9 L748.6 1131.6 L743.1 1138.1 L754.0 1147.2 L747.4 1155.2 L756.8 1163.1 L753.7 1166.8 L757.0 1185.4 L760.0 1184.9 L763.3 1203.8 L765.6 1203.4 L769.5 1225.7 L771.8 1225.3 L773.5 1235.0 L773.8 1235.0 L775.4 1244.0 L780.0 1243.2 L781.9 1254.0 L780.7 1254.2 L782.2 1262.6 L783.5 1262.4 L785.4 1273.4 L785.5 1273.4 L787.5 1284.5 L788.3 1284.4 L790.5 1296.8 L790.3 1296.8 L789.6 1311.9 L786.9 1322.9 L782.1 1329.7 L775.2 1336.6 L769.0 1340.0" fill="none" stroke="#2b2b2b" stroke-width="1.1" stroke-linejoin="miter"/><path d="M742 1356 L748 1350 L751 1340 M769 1340 L778 1335 L786 1326" fill="none" stroke="#111" stroke-width="1.4"/><path d="M316.4 536.7 L333 536.2 L343.5 538 L346.4 536.7 L347.7 533 L345.6 528 L342 525 L347 524.6" fill="none" stroke="#000" stroke-width="2" stroke-linejoin="round" stroke-linecap="round"/><circle cx="646.9" cy="1009.4" r="4.6" fill="#35801f"/><circle cx="735.9" cy="1161.7" r="4.6" fill="#35801f"/><circle cx="729.3" cy="1174.3" r="4.6" fill="#35801f"/><circle cx="754.2" cy="1231.5" r="4.6" fill="#0000ff"/><circle cx="751.9" cy="1239.3" r="4.6" fill="#35801f"/><circle cx="747.7" cy="1239.3" r="4.6" fill="#35801f"/><circle cx="761.2" cy="1304.0" r="4.6" fill="#35801f"/><circle cx="775.5" cy="1308.0" r="4.6" fill="#35801f"/><circle cx="765.6" cy="1326.3" r="4.6" fill="#35801f"/><circle cx="761.5" cy="1342.4" r="4.6" fill="#35801f"/></svg>
<div class="t" style="left:596.89px;top:979.00px;font-size:18.00px;color:#000;-webkit-text-stroke:0.30px #000;transform:scaleX(1.0107);">NGC 0337A</div>
<div class="t" style="left:579.81px;top:1055.00px;font-size:18.00px;color:#000;-webkit-text-stroke:0.30px #000;transform:scaleX(1.0471);">6dFgs gJ0127402-171330</div>
<div class="t" style="left:656.85px;top:1132.00px;font-size:18.00px;color:#000;-webkit-text-stroke:0.30px #000;transform:scaleX(0.9972);">2dFGRS S226Z092</div>
<div class="t" style="left:650.25px;top:1144.00px;font-size:18.00px;color:#000;-webkit-text-stroke:0.30px #000;transform:scaleX(0.9961);">2dFGRS S305Z230</div>
<div class="t" style="left:727.05px;top:1200.00px;font-size:18.00px;color:#000;-webkit-text-stroke:0.30px #000;transform:scaleX(0.9956);">Center</div>
<div class="t" style="left:641.91px;top:1208.00px;font-size:18.00px;color:#000;-webkit-text-stroke:0.30px #000;transform:scaleX(1.0457);">6dFgs gJ0230452-390200</div>
<div class="t" style="left:705.93px;top:1208.00px;font-size:18.00px;color:#000;-webkit-text-stroke:0.30px #000;transform:scaleX(0.9843);">NGC 0986</div>
<div class="t" style="left:729.08px;top:1273.00px;font-size:18.00px;color:#000;-webkit-text-stroke:0.30px #000;transform:scaleX(1.0038);">IC 1959</div>
<div class="t" style="left:634.33px;top:1278.00px;font-size:18.00px;color:#000;-webkit-text-stroke:0.30px #000;transform:scaleX(1.0259);">GALEXASC J035953.36-511217.6</div>
<div class="t" style="left:722.40px;top:1295.00px;font-size:18.00px;color:#000;-webkit-text-stroke:0.30px #000;transform:scaleX(1.0085);">NGC 1566</div>
<div class="t" style="left:682.96px;top:1312.00px;font-size:18.00px;color:#000;-webkit-text-stroke:0.30px #000;transform:scaleX(1.0313);">MRSS 119-049724</div>
<div class="t" style="left:62.66px;top:1446.00px;font-size:33.00px;color:#606164;-webkit-text-stroke:0.30px #606164;transform:scaleX(1.0020);">Show/Hide on Plot</div>
<svg style="left:82.0px;top:1511.0px" width="48" height="48" viewBox="0 0 24 24"><path fill="#4f7a9d" d="M19 3H5c-1.11 0-2 .9-2 2v14c0 1.1.89 2 2 2h14c1.11 0 2-.9 2-2V5c0-1.1-.89-2-2-2zm-9 14l-5-5 1.41-1.41L10 14.17l7.59-7.59L19 8l-9 9z"/></svg>
<div class="t" style="left:147.26px;top:1519.00px;font-size:32.50px;color:#1c1c1c;-webkit-text-stroke:0.30px #1c1c1c;transform:scaleX(1.0424);">localization</div>
<svg style="left:390.0px;top:1511.0px" width="48" height="48" viewBox="0 0 24 24"><path fill="#b9babd" d="M19 5v14H5V5h14m0-2H5c-1.1 0-2 .9-2 2v14c0 1.1.9 2 2 2h14c1.1 0 2-.9 2-2V5c0-1.1-.9-2-2-2z"/></svg>
<div class="t" style="left:455.75px;top:1519.00px;font-size:32.50px;color:#9fa0a3;-webkit-text-stroke:0.30px #9fa0a3;transform:scaleX(1.0036);">sources</div>
<svg style="left:697.2px;top:1511.0px" width="48" height="48" viewBox="0 0 24 24"><path fill="#4f7a9d" d="M19 3H5c-1.11 0-2 .9-2 2v14c0 1.1.89 2 2 2h14c1.11 0 2-.9 2-2V5c0-1.1-.89-2-2-2zm-9 14l-5-5 1.41-1.41L10 14.17l7.59-7.59L19 8l-9 9z"/></svg>
<div class="t" style="left:762.74px;top:1519.00px;font-size:32.50px;color:#1c1c1c;-webkit-text-stroke:0.30px #1c1c1c;transform:scaleX(1.0065);">galaxies</div>
<svg style="left:82.0px;top:1595.0px" width="48" height="48" viewBox="0 0 24 24"><path fill="#606164" d="M19 5v14H5V5h14m0-2H5c-1.1 0-2 .9-2 2v14c0 1.1.9 2 2 2h14c1.1 0 2-.9 2-2V5c0-1.1-.9-2-2-2z"/></svg>
<div class="t" style="left:147.37px;top:1603.00px;font-size:32.50px;color:#1c1c1c;-webkit-text-stroke:0.30px #1c1c1c;transform:scaleX(1.0333);">instrument</div>
<svg style="left:390.0px;top:1595.0px" width="48" height="48" viewBox="0 0 24 24"><path fill="#606164" d="M19 5v14H5V5h14m0-2H5c-1.1 0-2 .9-2 2v14c0 1.1.9 2 2 2h14c1.1 0 2-.9 2-2V5c0-1.1-.9-2-2-2z"/></svg>
<div class="t" style="left:455.33px;top:1603.00px;font-size:32.50px;color:#1c1c1c;-webkit-text-stroke:0.30px #1c1c1c;transform:scaleX(1.0185);">observations</div>
<div class="t" style="left:1082.59px;top:506.00px;font-size:28.00px;color:#4f7a9d;-webkit-text-stroke:1.10px #4f7a9d;transform:scaleX(0.9481);">QUERY FORM</div>
<div class="t" style="left:1325.38px;top:506.00px;font-size:28.00px;color:#606164;-webkit-text-stroke:1.10px #606164;transform:scaleX(0.9291);">SOURCES</div>
<div class="t" style="left:1517.77px;top:506.00px;font-size:28.00px;color:#606164;-webkit-text-stroke:1.10px #606164;transform:scaleX(0.9848);">GALAXIES</div>
<div class="t" style="left:1717.84px;top:506.00px;font-size:28.00px;color:#606164;-webkit-text-stroke:1.10px #606164;transform:scaleX(0.9831);">OBSERVATIONS</div>
<div class="b" style="left:1051.00px;top:563.00px;width:243.00px;height:4.00px;background:#4f7a9d"></div>
<div class="t" style="left:1050.27px;top:573.00px;font-size:33.00px;color:#606164;-webkit-text-stroke:0.30px #606164;transform:scaleX(1.0169);">Localization</div>
<div class="b" style="left:1051.00px;top:613.00px;width:1909.50px;height:112.00px;border:2px solid #b6b7ba;border-radius:8px"></div>
<div class="t" style="left:1077.99px;top:653.00px;font-size:32.70px;color:#1c1c1c;-webkit-text-stroke:0.30px #1c1c1c;transform:scaleX(0.9946);">Skymap: bayestar.multiorder.fits,1 / Created: 2023-03-29T15:46:06.737600</div>
<svg style="left:2897.5px;top:644.5px" width="48" height="48" viewBox="0 0 24 24"><path fill="#6a6b6e" d="m7 10 5 5 5-5z"/></svg>
<div class="t" style="left:1049.85px;top:732.00px;font-size:33.00px;color:#606164;-webkit-text-stroke:0.30px #606164;transform:scaleX(1.0144);">Instrument</div>
<div class="b" style="left:1051.00px;top:771.00px;width:1909.50px;height:112.00px;border:2px solid #b6b7ba;border-radius:8px"></div>
<div class="t" style="left:1076.88px;top:811.00px;font-size:32.70px;color:#1c1c1c;-webkit-text-stroke:0.30px #1c1c1c;transform:scaleX(0.9811);">P60 / SEDM</div>
<svg style="left:2897.5px;top:802.5px" width="48" height="48" viewBox="0 0 24 24"><path fill="#6a6b6e" d="m7 10 5 5 5-5z"/></svg>
<div class="b" style="left:1051.00px;top:915.00px;width:937.70px;height:111.50px;border:2px solid #b6b7ba;border-radius:8px"></div>
<div class="b" style="left:1070.00px;top:914.00px;width:146.00px;height:4.00px;background:#f0f2f6"></div>
<div class="t" style="left:1079.87px;top:903.00px;font-size:24.50px;color:#606164;-webkit-text-stroke:0.30px #606164;transform:scaleX(0.9825);">Start Date *</div>
<div class="t" style="left:1077.84px;top:955.00px;font-size:32.70px;color:#1c1c1c;-webkit-text-stroke:0.30px #1c1c1c;transform:scaleX(0.9860);">2023-03-29 08:42:16</div>
<div class="b" style="left:2020.70px;top:915.00px;width:939.80px;height:111.50px;border:2px solid #b6b7ba;border-radius:8px"></div>
<div class="b" style="left:2039.00px;top:914.00px;width:135.00px;height:4.00px;background:#f0f2f6"></div>
<div class="t" style="left:2048.97px;top:903.00px;font-size:24.50px;color:#606164;-webkit-text-stroke:0.30px #606164;transform:scaleX(0.9605);">End Date *</div>
<div class="t" style="left:2047.73px;top:955.00px;font-size:32.70px;color:#1c1c1c;-webkit-text-stroke:0.30px #1c1c1c;transform:scaleX(0.9887);">2023-04-05 08:42:16</div>
<div class="b" style="left:1051.00px;top:1059.00px;width:614.70px;height:111.50px;border:2px solid #b6b7ba;border-radius:8px"></div>
<div class="b" style="left:1070.00px;top:1058.00px;width:368.00px;height:4.00px;background:#f0f2f6"></div>
<div class="t" style="left:1078.96px;top:1047.00px;font-size:24.50px;color:#606164;-webkit-text-stroke:0.30px #606164;transform:scaleX(1.0132);">Minimum Number of Detections</div>
<div class="t" style="left:1077.60px;top:1099.00px;font-size:32.70px;color:#1c1c1c;-webkit-text-stroke:0.30px #1c1c1c;transform:scaleX(1.1297);">2</div>
<div class="b" style="left:1697.70px;top:1059.00px;width:615.00px;height:111.50px;border:2px solid #b6b7ba;border-radius:8px"></div>
<div class="b" style="left:1716.00px;top:1058.00px;width:282.00px;height:4.00px;background:#f0f2f6"></div>
<div class="t" style="left:1726.93px;top:1047.00px;font-size:24.50px;color:#606164;-webkit-text-stroke:0.30px #606164;transform:scaleX(0.9948);">Cumulative Probability *</div>
<div class="t" style="left:1725.41px;top:1099.00px;font-size:32.70px;color:#1c1c1c;-webkit-text-stroke:0.30px #1c1c1c;transform:scaleX(1.0104);">0.95</div>
<div class="b" style="left:2345.00px;top:1059.00px;width:615.50px;height:111.50px;border:2px solid #b6b7ba;border-radius:8px"></div>
<div class="b" style="left:2363.00px;top:1058.00px;width:298.00px;height:4.00px;background:#f0f2f6"></div>
<div class="t" style="left:2373.17px;top:1047.00px;font-size:24.50px;color:#606164;-webkit-text-stroke:0.30px #606164;transform:scaleX(1.0124);">Maximum Distance [Mpc]</div>
<div class="t" style="left:2371.08px;top:1099.00px;font-size:32.70px;color:#1c1c1c;-webkit-text-stroke:0.30px #1c1c1c;transform:scaleX(1.0462);">150</div>
<svg style="left:1047.0px;top:1221.0px" width="48" height="48" viewBox="0 0 24 24"><path fill="#606164" d="M19 5v14H5V5h14m0-2H5c-1.1 0-2 .9-2 2v14c0 1.1.9 2 2 2h14c1.1 0 2-.9 2-2V5c0-1.1-.9-2-2-2z"/></svg>
<div class="t" style="left:1112.14px;top:1229.00px;font-size:32.70px;color:#1c1c1c;-webkit-text-stroke:0.30px #1c1c1c;transform:scaleX(0.9976);">Do not display rejected sources</div>
<div class="b" style="left:1051.00px;top:1318.50px;width:1909.50px;height:112.00px;border:2px solid #b6b7ba;border-radius:8px"></div>
<div class="t" style="left:1077.92px;top:1358.00px;font-size:32.70px;color:#606164;-webkit-text-stroke:0.30px #606164;transform:scaleX(0.9857);">Query list *</div>
<svg style="left:2897.5px;top:1350.5px" width="48" height="48" viewBox="0 0 24 24"><path fill="#6a6b6e" d="m7 10 5 5 5-5z"/></svg>
<div class="b" style="left:1051.50px;top:1479.00px;width:169.50px;height:73.00px;border-radius:8px;background:#4f7a9d;box-shadow:0 6px 2px -4px rgba(0,0,0,.2),0 4px 4px 0 rgba(0,0,0,.14),0 2px 10px 0 rgba(0,0,0,.12)"></div>
<div class="t" style="left:1082.59px;top:1502.00px;font-size:28.00px;color:#fff;-webkit-text-stroke:1.10px #fff;transform:scaleX(0.9963);">SUBMIT</div>
<div class="b" style="left:1050.70px;top:1584.00px;width:356.30px;height:80.00px;border-radius:8px;background:#e0e0e0;box-shadow:0 6px 2px -4px rgba(0,0,0,.2),0 4px 4px 0 rgba(0,0,0,.14),0 2px 10px 0 rgba(0,0,0,.12)"></div>
<div class="b" style="left:1439.00px;top:1584.00px;width:356.60px;height:80.00px;border-radius:8px;background:#e0e0e0;box-shadow:0 6px 2px -4px rgba(0,0,0,.2),0 4px 4px 0 rgba(0,0,0,.14),0 2px 10px 0 rgba(0,0,0,.12)"></div>
<div class="b" style="left:1826.60px;top:1584.00px;width:357.00px;height:80.00px;border-radius:8px;background:#e0e0e0;box-shadow:0 6px 2px -4px rgba(0,0,0,.2),0 4px 4px 0 rgba(0,0,0,.14),0 2px 10px 0 rgba(0,0,0,.12)"></div>
<div class="b" style="left:2214.50px;top:1584.00px;width:357.50px;height:80.00px;border-radius:8px;background:#e0e0e0;box-shadow:0 6px 2px -4px rgba(0,0,0,.2),0 4px 4px 0 rgba(0,0,0,.14),0 2px 10px 0 rgba(0,0,0,.12)"></div>
<div class="b" style="left:2590px;top:1570px;width:370px;height:120px;overflow:hidden"><div class="b" style="left:13.4px;top:14px;width:420px;height:80px;border-radius:8px;background:#e0e0e0;box-shadow:0 6px 2px -4px rgba(0,0,0,.2),0 4px 4px 0 rgba(0,0,0,.14),0 2px 10px 0 rgba(0,0,0,.12)"></div></div>
<div class="t" style="left:1156.89px;top:1610.00px;font-size:28.00px;color:#1c1c1c;-webkit-text-stroke:1.10px #1c1c1c;transform:scaleX(0.9988);">SUMMARY</div>
<div class="t" style="left:1476.69px;top:1610.00px;font-size:28.00px;color:#1c1c1c;-webkit-text-stroke:1.10px #1c1c1c;transform:scaleX(0.9186);">SIMSURVEY ANALYSIS</div>
<div class="t" style="left:1899.30px;top:1610.00px;font-size:28.00px;color:#1c1c1c;-webkit-text-stroke:1.10px #1c1c1c;transform:scaleX(0.8896);">CATALOG QUERY</div>
<div class="t" style="left:2268.03px;top:1594.00px;font-size:28.00px;color:#1c1c1c;-webkit-text-stroke:1.10px #1c1c1c;transform:scaleX(0.8858);">SEND TO TREASURE</div>
<div class="t" style="left:2362.62px;top:1626.00px;font-size:28.00px;color:#1c1c1c;-webkit-text-stroke:1.10px #1c1c1c;transform:scaleX(0.9968);">MAP</div>
<div class="t" style="left:2681.13px;top:1594.00px;font-size:28.00px;color:#1c1c1c;-webkit-text-stroke:1.10px #1c1c1c;transform:scaleX(0.9038);">RETRACT FROM</div>
<div class="t" style="left:2682.58px;top:1626.00px;font-size:28.00px;color:#1c1c1c;-webkit-text-stroke:1.10px #1c1c1c;transform:scaleX(0.9026);">TREASURE MAP</div>
</body></html>
